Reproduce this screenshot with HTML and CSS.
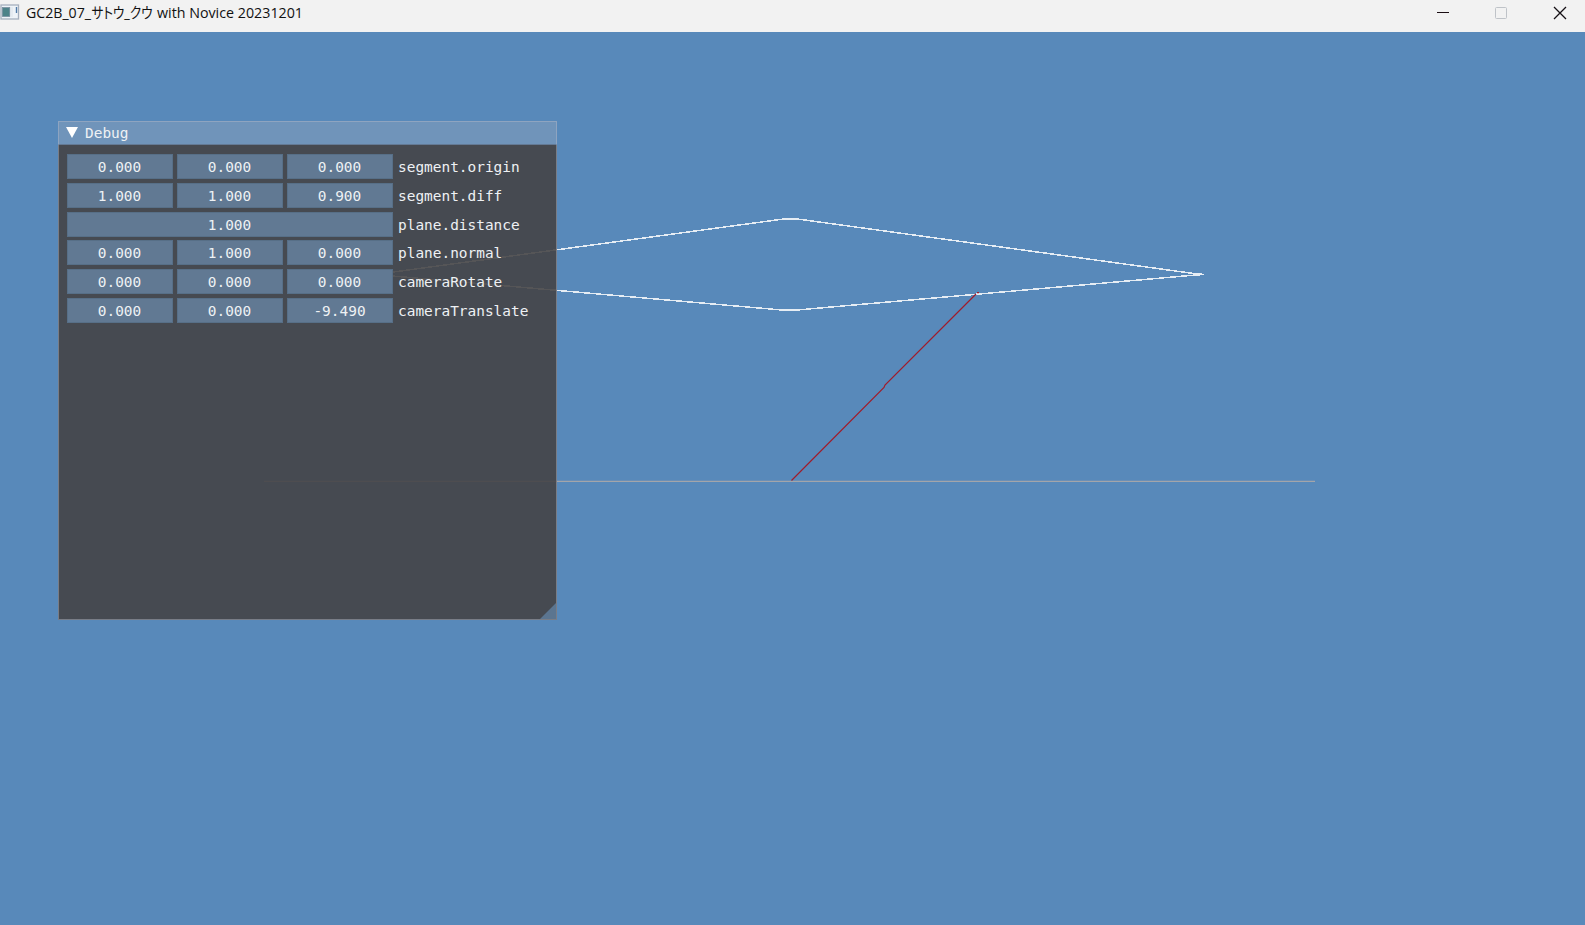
FILE: index.html
```html
<!DOCTYPE html>
<html lang="ja">
<head>
<meta charset="utf-8">
<title>GC2B_07_サトウ_クウ with Novice 20231201</title>
<link rel="stylesheet" href="styles.css">
</head>
<body>
<header class="titlebar">
  <svg class="app-icon" width="20" height="16" viewBox="0 0 20 16">
    <rect x="1" y="1" width="17.5" height="14" fill="#eef3f8" stroke="#a5afbd" stroke-width="1.3"/>
    <rect x="2.3" y="3.5" width="7.5" height="9" fill="#4d8389" stroke="#778b9d" stroke-width=".7"/>
    <path d="M12 3V13" stroke="#dce3ea"/>
    <path d="M16.5 3V9" stroke="#527ca8" stroke-width="1.4"/>
  </svg>
  <svg class="caption" width="320" height="32">
    <text x="0" y="18" textLength="65" lengthAdjust="spacingAndGlyphs">GC2B_07_</text>
    <text x="65.5" y="18" textLength="61" lengthAdjust="spacingAndGlyphs" class="kana">サトウ_クウ</text>
    <text x="131" y="18" textLength="146" lengthAdjust="spacingAndGlyphs">with Novice 20231201</text>
  </svg>
  <svg class="controls" width="132" height="32" fill="none">
    <path d="M0 12.5H12" stroke="#1b0d13"/>
    <rect x="58.5" y="7.5" width="11" height="11" rx="1" stroke="#bfc3c8"/>
    <path d="M117 7L129 19M129 7L117 19" stroke="#151015" stroke-width="1.3"/>
  </svg>
</header>
<main class="viewport">
  <svg class="scene" width="1585" height="893" viewBox="0 32 1585 893" fill="none">
    <path d="M264 481.4H1315" stroke="#a3a5aa" stroke-width="1.2"/>
    <path class="plane" d="M375 274.5L785 218.8H796L1190 273L1204 274.5L1190 275.5L796 310.1H783Z"/>
    <path d="M791.5 480.5L884 387.5L885 385L976 294M977 292.6H979" stroke="#a01c2b" stroke-width="1.2"/>
  </svg>
  <section class="debug">
    <div class="debug-title">
      <svg width="12" height="11"><path d="M0 0H12L6 11Z" fill="#fff"/></svg>
      <span>Debug</span>
    </div>
    <div class="rows">
      <div class="row"><span class="field">0.000</span><span class="field">0.000</span><span class="field">0.000</span><span class="label">segment.origin</span></div>
      <div class="row"><span class="field">1.000</span><span class="field">1.000</span><span class="field">0.900</span><span class="label">segment.diff</span></div>
      <div class="row"><span class="field wide">1.000</span><span class="label">plane.distance</span></div>
      <div class="row"><span class="field">0.000</span><span class="field">1.000</span><span class="field">0.000</span><span class="label">plane.normal</span></div>
      <div class="row"><span class="field">0.000</span><span class="field">0.000</span><span class="field">0.000</span><span class="label">cameraRotate</span></div>
      <div class="row"><span class="field">0.000</span><span class="field">0.000</span><span class="field">-9.490</span><span class="label">cameraTranslate</span></div>
    </div>
    <svg class="grip" width="16" height="16"><path d="M16 0V16H0Z" fill="#5b7590"/></svg>
  </section>
</main>
</body>
</html>
```
FILE: styles.css
```css
body {
  margin: 0;
  width: 1585px;
  height: 925px;
  overflow: hidden;
  background: #5889ba;
}
.titlebar {
  display: flex;
  height: 32px;
  background: #f2f2f2;
}
.app-icon { margin-top: 4px; }
.caption {
  margin-left: 6px;
  font: 15px "Open Sans", "Noto Sans CJK JP", sans-serif;
  fill: #111;
}
.kana { font-feature-settings: "palt"; }
.controls { margin-left: auto; margin-right: 16px; }
.viewport {
  position: relative;
  height: 893px;
}
.scene { display: block; }
.plane {
  stroke: #e6edf4;
  stroke-width: 1.5;
  shape-rendering: crispEdges;
}
.debug {
  position: absolute;
  left: 58px;
  top: 89px;
  box-sizing: border-box;
  width: 499px;
  height: 499px;
  border: 1px solid #797d86;
  background: rgba(69, 68, 70, .9);
  color: #eef1f4;
  font: 14.45px/24px "DejaVu Sans Mono", monospace;
}
.debug-title {
  display: flex;
  align-items: center;
  gap: 7px;
  box-sizing: content-box;
  height: 22px;
  margin: -1px -1px 0;
  padding-left: 7px;
  border: 1px solid #8ea4c0;
  border-bottom-color: #647a95;
  background: #7094ba;
}
.debug-title svg { margin-top: -2px; }
.rows {
  display: flex;
  flex-direction: column;
  gap: 3.75px;
  padding: 9px 0 0 8px;
}
.row {
  display: flex;
  gap: 4px;
  height: 25px;
}
.field {
  box-sizing: border-box;
  width: 106px;
  height: 25px;
  border: 1px solid #576f87;
  background: rgba(98, 123, 150, .96);
  text-align: center;
  padding-right: 1px;
}
.wide { width: 326px; }
.label { margin-left: 1px; line-height: 26px; }
.grip {
  position: absolute;
  right: 0;
  bottom: 0;
}
```
